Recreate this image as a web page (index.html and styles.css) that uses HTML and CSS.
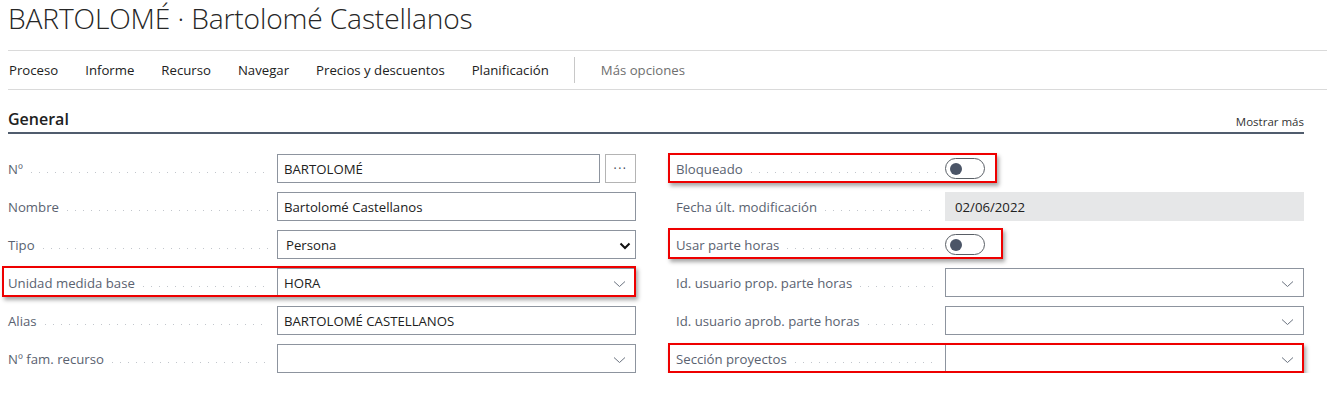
FILE: index.html
```html
<!DOCTYPE html>
<html>
<head>
    <title>Recurso - BARTOLOMÉ</title>
    <meta charset="UTF-8">
    <link rel="stylesheet" href="styles.css">
</head>
<body>
    <div class="page">
        <h1 class="title">BARTOLOMÉ · Bartolomé Castellanos</h1>

        <div class="actions">
            <span class="action">Proceso</span>
            <span class="action">Informe</span>
            <span class="action">Recurso</span>
            <span class="action">Navegar</span>
            <span class="action">Precios y descuentos</span>
            <span class="action">Planificación</span>
            <span class="divider"></span>
            <span class="action more">Más opciones</span>
        </div>

        <div class="group">
            <div class="group-head">
                <h2>General</h2>
                <span class="show-more">Mostrar más</span>
            </div>

            <div class="fields">
                <!-- columna izquierda -->
                <div class="col">
                    <div class="row">
                        <div class="caption"><span>Nº</span><i class="leader"></i></div>
                        <div class="control with-btn">
                            <div class="box">BARTOLOMÉ</div>
                            <div class="assist">···</div>
                        </div>
                    </div>
                    <div class="row">
                        <div class="caption"><span>Nombre</span><i class="leader"></i></div>
                        <div class="control"><div class="box">Bartolomé Castellanos</div></div>
                    </div>
                    <div class="row">
                        <div class="caption"><span>Tipo</span><i class="leader"></i></div>
                        <div class="control">
                            <div class="box select native">Persona
                                <svg class="chev" width="12" height="8" viewBox="0 0 12 8"><path d="M1.5 1.5 L6 6 L10.5 1.5" fill="none" stroke="#111" stroke-width="2"/></svg>
                            </div>
                        </div>
                    </div>
                    <div class="row marked mark-unit">
                        <div class="caption"><span>Unidad medida base</span><i class="leader"></i></div>
                        <div class="control">
                            <div class="box select">HORA
                                <svg class="chev" width="13" height="8" viewBox="0 0 13 8"><path d="M1 1.5 L6.5 6.5 L12 1.5" fill="none" stroke="#6b7380" stroke-width="1"/></svg>
                            </div>
                        </div>
                    </div>
                    <div class="row">
                        <div class="caption"><span>Alias</span><i class="leader"></i></div>
                        <div class="control"><div class="box">BARTOLOMÉ CASTELLANOS</div></div>
                    </div>
                    <div class="row">
                        <div class="caption"><span>Nº fam. recurso</span><i class="leader"></i></div>
                        <div class="control">
                            <div class="box select">
                                <svg class="chev" width="13" height="8" viewBox="0 0 13 8"><path d="M1 1.5 L6.5 6.5 L12 1.5" fill="none" stroke="#6b7380" stroke-width="1"/></svg>
                            </div>
                        </div>
                    </div>
                </div>

                <!-- columna derecha -->
                <div class="col">
                    <div class="row marked mark-blocked">
                        <div class="caption"><span>Bloqueado</span><i class="leader"></i></div>
                        <div class="control"><span class="toggle"><i class="knob"></i></span></div>
                    </div>
                    <div class="row">
                        <div class="caption"><span>Fecha últ. modificación</span><i class="leader"></i></div>
                        <div class="control"><div class="box readonly">02/06/2022</div></div>
                    </div>
                    <div class="row marked mark-timesheet">
                        <div class="caption"><span>Usar parte horas</span><i class="leader"></i></div>
                        <div class="control"><span class="toggle"><i class="knob"></i></span></div>
                    </div>
                    <div class="row">
                        <div class="caption"><span>Id. usuario prop. parte horas</span><i class="leader"></i></div>
                        <div class="control">
                            <div class="box select">
                                <svg class="chev" width="13" height="8" viewBox="0 0 13 8"><path d="M1 1.5 L6.5 6.5 L12 1.5" fill="none" stroke="#6b7380" stroke-width="1"/></svg>
                            </div>
                        </div>
                    </div>
                    <div class="row">
                        <div class="caption"><span>Id. usuario aprob. parte horas</span><i class="leader"></i></div>
                        <div class="control">
                            <div class="box select">
                                <svg class="chev" width="13" height="8" viewBox="0 0 13 8"><path d="M1 1.5 L6.5 6.5 L12 1.5" fill="none" stroke="#6b7380" stroke-width="1"/></svg>
                            </div>
                        </div>
                    </div>
                    <div class="row marked mark-section">
                        <div class="caption"><span>Sección proyectos</span><i class="leader"></i></div>
                        <div class="control">
                            <div class="box select">
                                <svg class="chev" width="13" height="8" viewBox="0 0 13 8"><path d="M1 1.5 L6.5 6.5 L12 1.5" fill="none" stroke="#6b7380" stroke-width="1"/></svg>
                            </div>
                        </div>
                    </div>
                </div>
            </div>
        </div>
    </div>
</body>
</html>
```

FILE: styles.css
```css
body { margin: 0; background: #fff; font-family: "Open Sans", "Noto Sans", sans-serif; font-size: 13.2px; color: #212121; }
.page { padding-left: 8px; }

.title { margin: 0; height: 50px; font-size: 28.2px; font-weight: 300; line-height: 36px; color: #262626; border-bottom: 1px solid #dadada; letter-spacing: -0.15px; }

.actions { display: flex; align-items: center; height: 38px; border-bottom: 1px solid #dadada; }
.action { margin-right: 27px; white-space: nowrap; }
.action:first-child { margin-left: 1px; }
.action.more { color: #6f6f6f; }
.divider { width: 1px; height: 26px; background: #c8c8c8; margin: 0 26px 0 -2px; }

.group { padding-right: 23px; }
.group-head { display: flex; justify-content: space-between; align-items: flex-end; height: 42px; border-bottom: 2px solid #505c6d; }
.group-head h2 { margin: 0 0 2px; font-size: 16px; font-weight: 600; color: #212121; }
.show-more { font-size: 11.5px; color: #333; margin-bottom: 3px; }

.fields { display: grid; grid-template-columns: 1fr 1fr; column-gap: 40px; margin-top: 20px; }
.col { display: flex; flex-direction: column; gap: 9px; }
.row { position: relative; display: grid; grid-template-columns: 269px 1fr; height: 29px; }

.caption { display: flex; align-items: center; color: #5a6270; white-space: nowrap; padding-right: 9px; }
.leader { flex: 1; height: 1px; margin: 7px 0 0 8px; background-image: linear-gradient(to right, #c2c6cc 1px, transparent 1px); background-size: 8px 1px; background-repeat: repeat-x; }

.control { display: flex; align-items: center; }
.box { flex: 1; box-sizing: border-box; height: 29px; border: 1px solid #8d949e; padding: 0 6px; display: flex; align-items: center; color: #212121; }
.box.select { position: relative; }
.box.native { padding-left: 8px; }
.chev { position: absolute; right: 9px; top: 11px; }
.box.native .chev { right: 4px; top: 11px; }
.box.readonly { border-color: #e6e7e8; background: #e6e7e8; padding-left: 9px; }

.with-btn { gap: 5px; }
.assist { width: 31px; height: 29px; box-sizing: border-box; border: 1px solid #b4b4b4; display: flex; align-items: center; justify-content: center; color: #3c4452; font-size: 12px; letter-spacing: 1.5px; }

.toggle { display: inline-flex; align-items: center; box-sizing: border-box; width: 40px; height: 21px; border: 1px solid #5a5f66; border-radius: 11px; padding-left: 4px; }
.knob { width: 12px; height: 12px; border-radius: 50%; background: #4b5567; }

/* anotaciones en rojo */
.marked::after { content: ""; position: absolute; top: -1px; bottom: 0; left: -8px; right: 0; border: 2px solid #ee0000; box-shadow: 2px 3px 4px rgba(0, 0, 0, 0.35); pointer-events: none; }
.mark-unit::after { left: -6px; top: -2px; }
.mark-blocked::after { right: 307px; }
.mark-timesheet::after { right: 301px; top: -2px; }
```
